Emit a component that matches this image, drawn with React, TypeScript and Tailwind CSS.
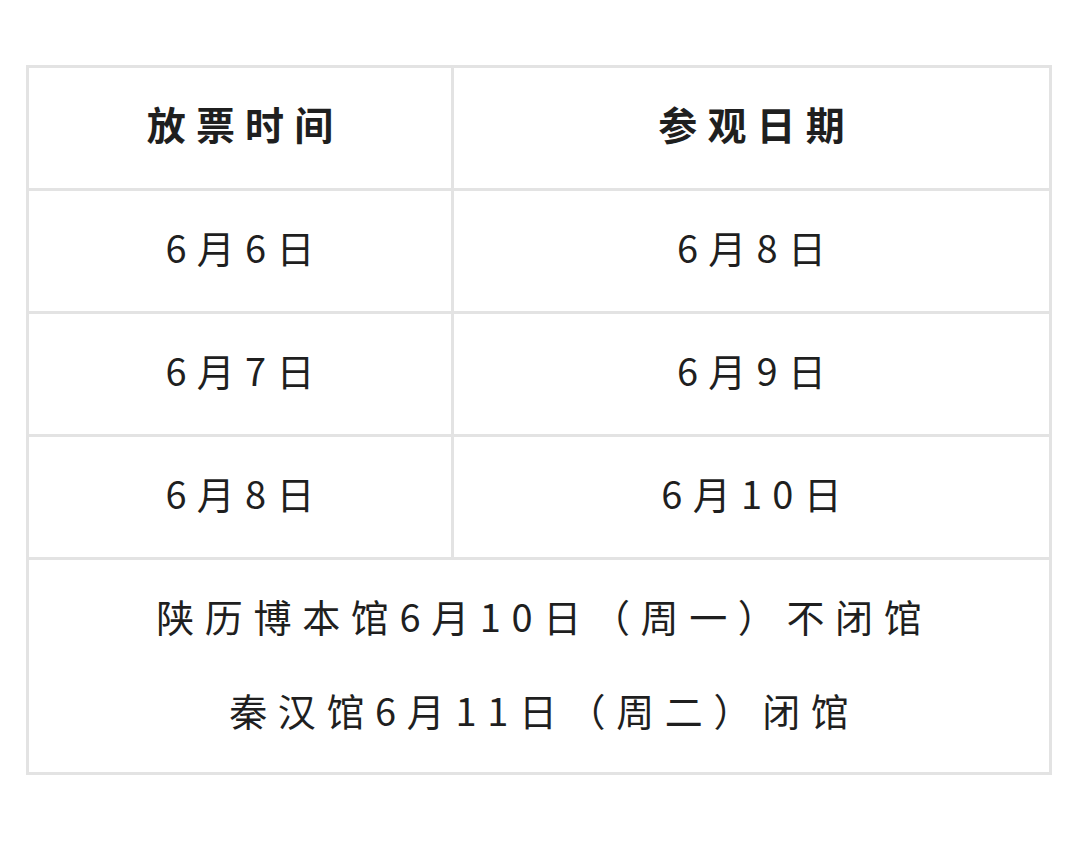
const rows = [
  ["6月6日", "6月8日"],
  ["6月7日", "6月9日"],
  ["6月8日", "6月10日"],
];

const font = { fontFamily: '"Noto Sans CJK SC", "Noto Sans", sans-serif' };

export default function App() {
  return (
    <main className="min-h-[851px] bg-white pl-[26px] pt-[65px] text-[#1f1f1f]" style={font}>
      <table className="w-[1026px] border-collapse border-[3px] border-[#e3e3e3] text-center">
        <thead>
          <tr className="h-[123px]">
            <th className="w-[425px] border-[3px] border-[#e3e3e3] pb-[10px] pl-[0.26em] text-[39px] font-bold tracking-[0.26em]">放票时间</th>
            <th className="border-[3px] border-[#e3e3e3] pb-[10px] pl-[0.26em] text-[39px] font-bold tracking-[0.26em]">参观日期</th>
          </tr>
        </thead>
        <tbody>
          {rows.map(([a, b]) => (
            <tr key={a + b} className="h-[123px]">
              <td className="border-[3px] border-[#e3e3e3] pb-[9px] pl-[0.27em] text-[38px] tracking-[0.27em]">{a}</td>
              <td className="border-[3px] border-[#e3e3e3] pb-[9px] pl-[0.27em] text-[38px] tracking-[0.27em]">{b}</td>
            </tr>
          ))}
          <tr className="h-[215px]">
            <td colSpan={2} className="border-[3px] border-[#e3e3e3] pl-[0.28em] text-[38px] tracking-[0.28em]">
              <div className="flex flex-col items-center gap-[38px] pb-[6px]">
                <div className="leading-[56px]">陕历博本馆6月10日（周一）不闭馆</div>
                <div className="leading-[56px]">秦汉馆6月11日（周二）闭馆</div>
              </div>
            </td>
          </tr>
        </tbody>
      </table>
    </main>
  );
}
